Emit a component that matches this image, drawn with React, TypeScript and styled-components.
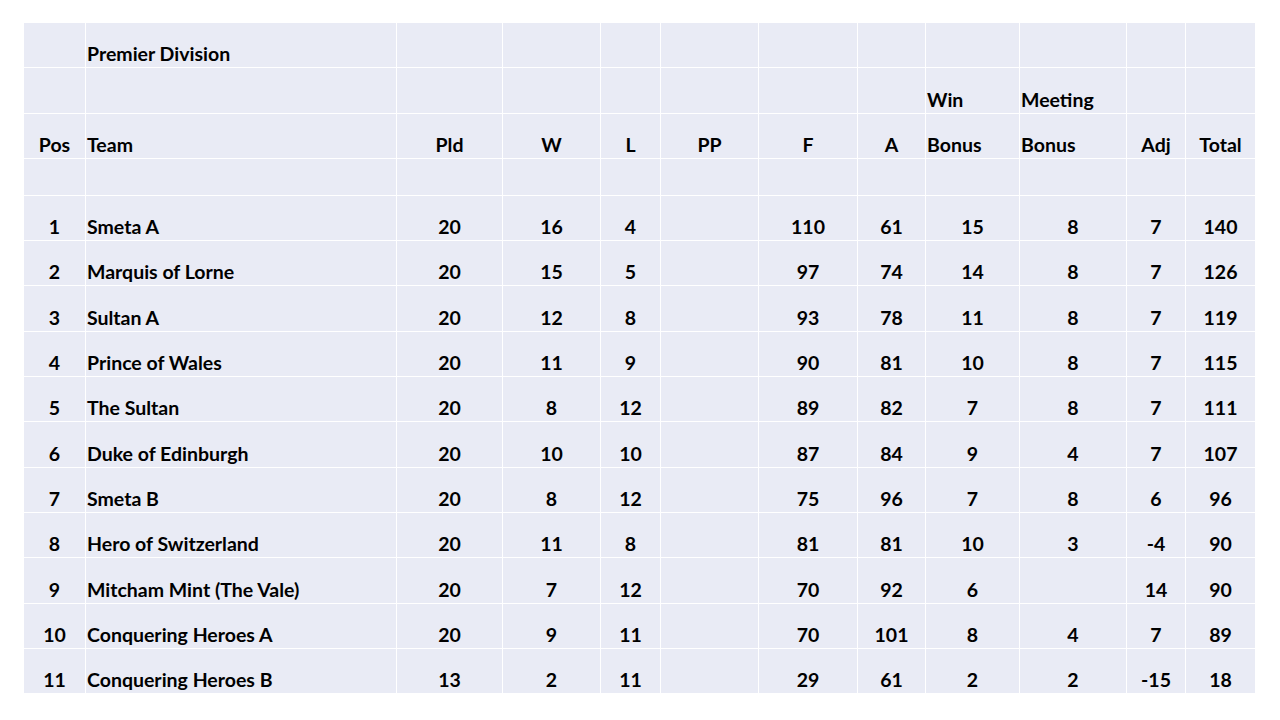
import React from 'react';
import styled, { createGlobalStyle } from 'styled-components';

const GlobalStyle = createGlobalStyle`
  html, body {
    margin: 0;
    padding: 0;
    background: #ffffff;
  }
  body {
    font-family: Lato, "Open Sans", "Liberation Sans", sans-serif;
  }
`;

const Page = styled.div`
  width: 1280px;
  height: 720px;
  padding: 22px 0 0 23px;
  box-sizing: border-box;
`;

const Table = styled.table`
  border-collapse: collapse;
  table-layout: fixed;
  width: 1232px;
  background: #e9ebf5;
  color: #000;
  font-weight: 700;
  font-size: 19.5px;
`;

const Row = styled.tr<{ $h?: number }>`
  height: ${({ $h }) => $h ?? 45.3}px;
`;

const Cell = styled.td<{ $align?: 'left' | 'center' }>`
  border: 1px solid #ffffff;
  padding: 0 1px 2px;
  vertical-align: bottom;
  text-align: ${({ $align }) => $align ?? 'center'};
  white-space: nowrap;
  line-height: 22px;
`;

const widths = [62, 311, 106, 98, 60, 98, 99, 68, 94, 107, 59, 70];

type Team = [string, string, string, string, string, string, string, string, string, string, string];

const teams: Team[] = [
  ['1', 'Smeta A', '20', '16', '4', '110', '61', '15', '8', '7', '140'],
  ['2', 'Marquis of Lorne', '20', '15', '5', '97', '74', '14', '8', '7', '126'],
  ['3', 'Sultan A', '20', '12', '8', '93', '78', '11', '8', '7', '119'],
  ['4', 'Prince of Wales', '20', '11', '9', '90', '81', '10', '8', '7', '115'],
  ['5', 'The Sultan', '20', '8', '12', '89', '82', '7', '8', '7', '111'],
  ['6', 'Duke of Edinburgh', '20', '10', '10', '87', '84', '9', '4', '7', '107'],
  ['7', 'Smeta B', '20', '8', '12', '75', '96', '7', '8', '6', '96'],
  ['8', 'Hero of Switzerland', '20', '11', '8', '81', '81', '10', '3', '-4', '90'],
  ['9', 'Mitcham Mint (The Vale)', '20', '7', '12', '70', '92', '6', '', '14', '90'],
  ['10', 'Conquering Heroes A', '20', '9', '11', '70', '101', '8', '4', '7', '89'],
  ['11', 'Conquering Heroes B', '13', '2', '11', '29', '61', '2', '2', '-15', '18'],
];

const blanks = (n: number) => Array.from({ length: n }, (_, i) => <Cell key={`b${i}`} />);

export default function App() {
  return (
    <>
      <GlobalStyle />
      <Page>
        <Table>
          <colgroup>
            {widths.map((w, i) => (
              <col key={i} style={{ width: w }} />
            ))}
          </colgroup>
          <tbody>
            <Row>
              <Cell />
              <Cell $align="left">Premier Division</Cell>
              {blanks(10)}
            </Row>
            <Row>
              {blanks(8)}
              <Cell $align="left">Win</Cell>
              <Cell $align="left">Meeting</Cell>
              {blanks(2)}
            </Row>
            <Row>
              <Cell>Pos</Cell>
              <Cell $align="left">Team</Cell>
              <Cell>Pld</Cell>
              <Cell>W</Cell>
              <Cell>L</Cell>
              <Cell>PP</Cell>
              <Cell>F</Cell>
              <Cell>A</Cell>
              <Cell $align="left">Bonus</Cell>
              <Cell $align="left">Bonus</Cell>
              <Cell>Adj</Cell>
              <Cell>Total</Cell>
            </Row>
            <Row $h={37}>{blanks(12)}</Row>
            {teams.map((t) => (
              <Row key={t[0]}>
                <Cell>{t[0]}</Cell>
                <Cell $align="left">{t[1]}</Cell>
                <Cell>{t[2]}</Cell>
                <Cell>{t[3]}</Cell>
                <Cell>{t[4]}</Cell>
                <Cell />
                <Cell>{t[5]}</Cell>
                <Cell>{t[6]}</Cell>
                <Cell>{t[7]}</Cell>
                <Cell>{t[8]}</Cell>
                <Cell>{t[9]}</Cell>
                <Cell>{t[10]}</Cell>
              </Row>
            ))}
          </tbody>
        </Table>
      </Page>
    </>
  );
}
